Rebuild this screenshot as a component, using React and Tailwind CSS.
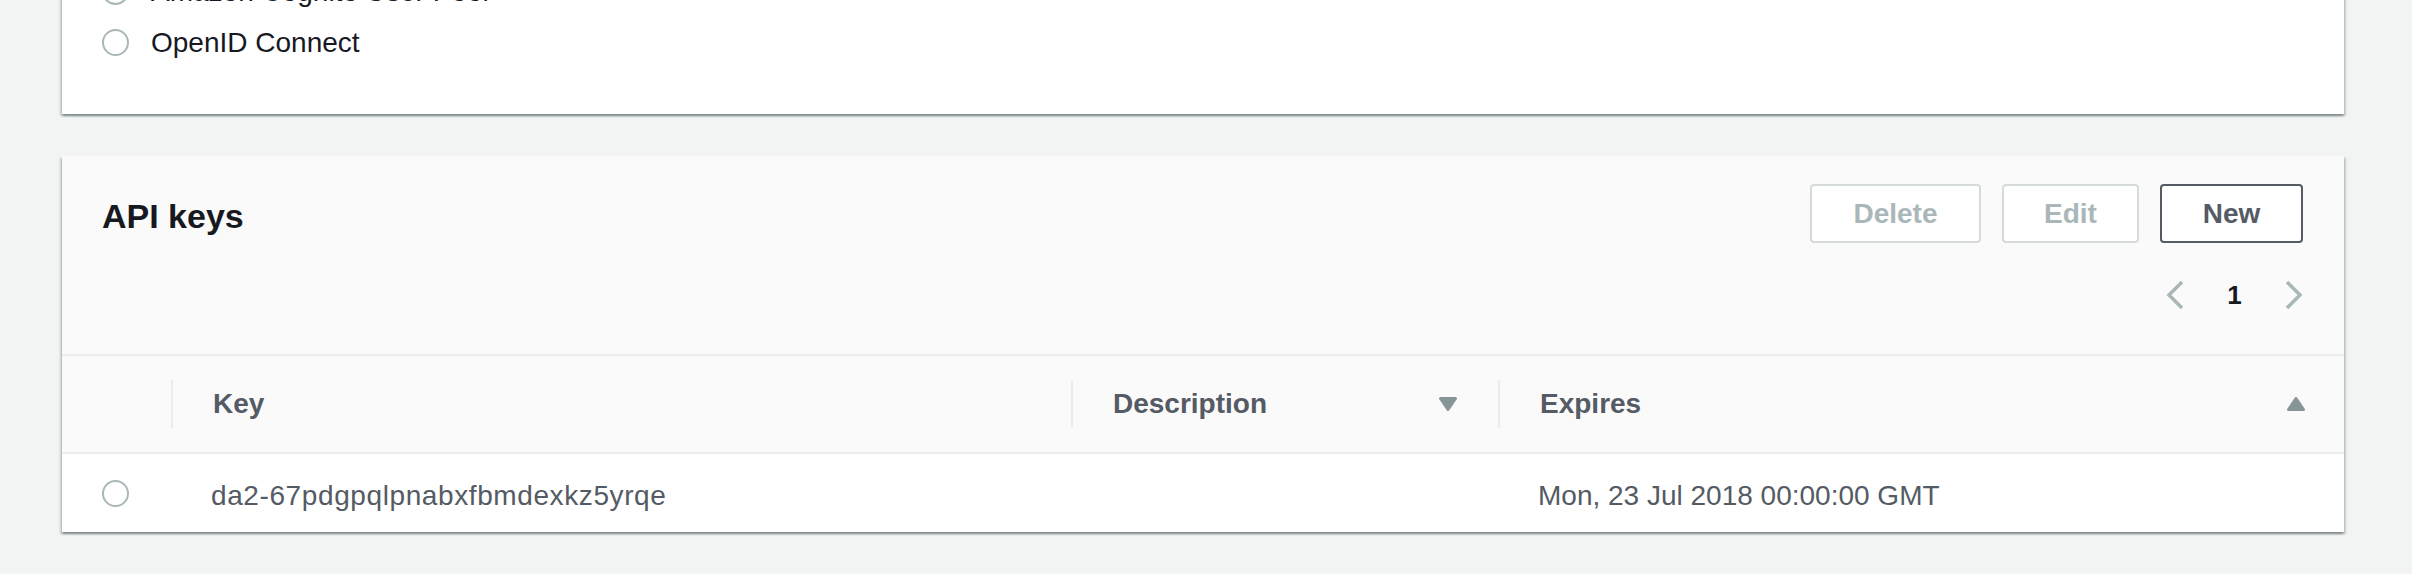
function Radio() {
  return (
    <span className="block w-[27px] h-[27px] rounded-full border-2 border-[#aab7b8] bg-white shrink-0" />
  );
}

function RadioRow({ label }) {
  return (
    <div className="flex items-center h-[51px] gap-[22px]">
      <Radio />
      <span className="leading-[40px]">{label}</span>
    </div>
  );
}

function TriangleDown() {
  return (
    <svg width="20" height="16" viewBox="0 0 20 16" className="shrink-0">
      <polygon points="2.5,2.5 17.5,2.5 10,13.5" fill="#879596" stroke="#879596" strokeWidth="3" strokeLinejoin="round" />
    </svg>
  );
}

function TriangleUp() {
  return (
    <svg width="20" height="16" viewBox="0 0 20 16" className="shrink-0">
      <polygon points="2.5,13.5 17.5,13.5 10,2.5" fill="#879596" stroke="#879596" strokeWidth="3" strokeLinejoin="round" />
    </svg>
  );
}

function ChevronLeft() {
  return (
    <svg width="18" height="30" viewBox="0 0 18 30" className="shrink-0">
      <polyline points="16,2 3,15 16,28" fill="none" stroke="#aab7b8" strokeWidth="3.5" />
    </svg>
  );
}

function ChevronRight() {
  return (
    <svg width="18" height="30" viewBox="0 0 18 30" className="shrink-0">
      <polyline points="2,2 15,15 2,28" fill="none" stroke="#aab7b8" strokeWidth="3.5" />
    </svg>
  );
}

export default function App() {
  return (
    <div className="min-h-screen overflow-hidden bg-[#f2f3f3] font-['Liberation_Sans',Arial,sans-serif]">
      <div className="ml-[62px] w-[2282px]">
        {/* Authorization type panel (scrolled) */}
        <div className="-mt-[34px] bg-white pl-[40px] pb-[46px] text-[28px] text-[#16191f] shadow-[0_2px_2px_0_rgba(0,28,36,0.3),2px_2px_2px_0_rgba(0,28,36,0.15),-2px_2px_2px_0_rgba(0,28,36,0.15)]">
          <RadioRow label="Amazon Cognito User Pool" />
          <RadioRow label="OpenID Connect" />
        </div>

        {/* API keys panel */}
        <div className="mt-[42px] bg-white shadow-[0_2px_2px_0_rgba(0,28,36,0.3),2px_2px_2px_0_rgba(0,28,36,0.15),-2px_2px_2px_0_rgba(0,28,36,0.15)]">
          <div className="flex items-start justify-between bg-[#fafafa] border-b-2 border-[#eaeded] pl-[40px] pr-[41px] pt-[28px] pb-[44px]">
            <h2 className="mt-[3px] text-[34px] leading-[59px] font-bold text-[#16191f]">API keys</h2>
            <div className="flex flex-col items-end">
              <div className="flex gap-[21px]">
                <button className="w-[171px] h-[59px] rounded-[4px] border-2 border-[#d5dbdb] bg-white text-[28px] font-bold text-[#aab7b8] flex items-center justify-center">
                  Delete
                </button>
                <button className="w-[137px] h-[59px] rounded-[4px] border-2 border-[#d5dbdb] bg-white text-[28px] font-bold text-[#aab7b8] flex items-center justify-center">
                  Edit
                </button>
                <button className="w-[143px] h-[59px] rounded-[4px] border-2 border-[#545b64] bg-white text-[28px] font-bold text-[#545b64] flex items-center justify-center">
                  New
                </button>
              </div>
              <div className="mt-[37px] h-[30px] flex items-center">
                <ChevronLeft />
                <span className="w-[101px] text-center text-[26px] leading-[30px] font-bold text-[#16191f]">1</span>
                <ChevronRight />
              </div>
            </div>
          </div>

          <div className="grid grid-cols-[109px_900px_427px_1fr] h-[98px] bg-[#fafafa] border-b-2 border-[#eaeded] text-[28px] font-bold text-[#545b64]">
            <div />
            <div className="flex items-center pr-[40px]">
              <div className="w-[2px] h-[48px] bg-[#eaeded]" />
              <span className="flex-1 pl-[40px] leading-[40px]">Key</span>
            </div>
            <div className="flex items-center pr-[40px]">
              <div className="w-[2px] h-[48px] bg-[#eaeded]" />
              <span className="flex-1 pl-[40px] leading-[40px]">Description</span>
              <TriangleDown />
            </div>
            <div className="flex items-center pr-[38px]">
              <div className="w-[2px] h-[48px] bg-[#eaeded]" />
              <span className="flex-1 pl-[40px] leading-[40px]">Expires</span>
              <TriangleUp />
            </div>
          </div>

          <div className="grid grid-cols-[109px_900px_427px_1fr] items-center h-[78px] bg-white text-[28px] text-[#545b64]">
            <div className="pl-[40px] flex items-center">
              <Radio />
            </div>
            <div className="pl-[40px] pt-[6px] leading-[40px] tracking-[0.6px]">da2-67pdgpqlpnabxfbmdexkz5yrqe</div>
            <div />
            <div className="pl-[40px] pt-[6px] leading-[40px]">Mon, 23 Jul 2018 00:00:00 GMT</div>
          </div>
        </div>
      </div>
    </div>
  );
}
